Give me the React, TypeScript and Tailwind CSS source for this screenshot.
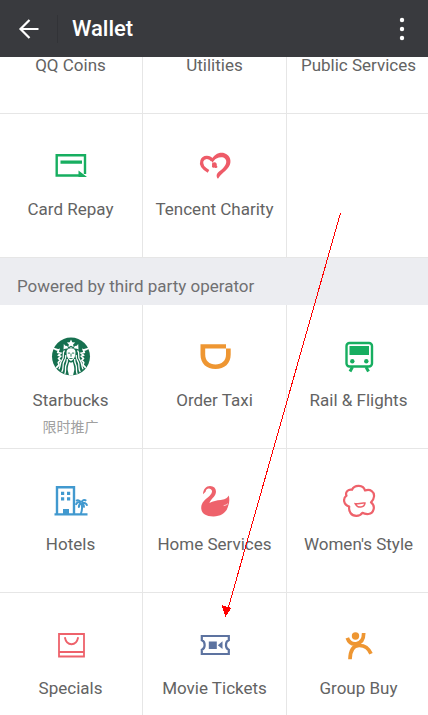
import type { ReactNode } from "react";

type Item = { label?: string; note?: string; icon?: ReactNode };

function CardRepayIcon() {
  return (
    <svg width="40" height="40" viewBox="0 0 40 40" fill="none" aria-hidden="true">
      <path d="M29 29.500H5.700V9.300h28.300V28" stroke="#17ae60" strokeWidth="2.400" />
      <path d="M9.500 14.500h21.500v3.300H9.500z M27.500 24.500L36 31H27.500z" fill="#17ae60" />
    </svg>
  );
}

function CharityIcon() {
  return (
    <svg width="40" height="40" viewBox="0 0 40 40" fill="none" aria-hidden="true">
      <path
        d="M13.500 25.300C8.500 22.500 5.600 18.500 6.900 14.800C8.500 10.500 14.500 10 17.500 14.700"
        stroke="#ee5b68"
        strokeWidth="3.200"
      />
      <path
        d="M16.300 14C19 8.500 24 5.800 29.500 7.200C35.500 9.200 37 15.500 34 20.500C31.500 25 26 27.500 23 32.800C20.800 30.500 21.500 27.700 23.500 26C27 23.500 30.500 20.500 31.200 16.500C31.900 11.500 26.500 9.700 21.500 12.500C19.500 13.500 18.500 15 17.500 17Z"
        fill="#ee5b68"
      />
      <path d="M17 17.500c2.500-2.500 5.500-.8 4.700 2 1.900 1.500-.2 3.700-2.100 2-2 .8-3.200-.6-2.500-2z" fill="#ee5b68" />
    </svg>
  );
}

function StarbucksIcon() {
  return (
    <svg width="40" height="40" viewBox="0 0 40 40" fill="none" aria-hidden="true">
      <circle cx="20" cy="19.500" r="19" fill="#16704f" />
      <path
        d="M20 2.500l1.300 2.700 2.900.3-2.100 2 .6 2.700-2.700-1.400-2.700 1.400.6-2.700-2.100-2 2.900-.3z M12.800 7l1.500 1.800 2 .2 1 2.500 2.700-1.200 2.700 1.200 1-2.500 2-.2 1.500-1.800.3 5.500c-4-2-11-2-15 0z"
        fill="#fff"
      />
      <path d="M15.500 15c0-5 9-5 9 0 0 5-2 8-4.500 9-2.500-1-4.500-4-4.500-9z" fill="#fff" />
      <path d="M16.800 16.100h2.200m2 0h2.200 M20 16.500v3.200 M18.400 21.500h3.200" stroke="#16704f" strokeWidth=".9" />
      <path
        d="M2 11.500c2.800.2 3.700 2 5.700 1.300L6.800 15.500l3 .7-2.200 2 2 1-2 2.300 1.500 1.700-1.800 2.200.7 2.500-2.800 3 M38 11.500c-2.800.2-3.700 2-5.700 1.300l.9 2.700-3 .7 2.200 2-2 1 2 2.300-1.500 1.700 1.800 2.200-.7 2.500 2.800 3"
        stroke="#fff"
        strokeWidth="1.700"
      />
      <path
        d="M13.500 13.500c-3 3 .5 6-2.300 9.300-2.500 3-1.300 5-3.200 9.500 M14.700 18c1 4-2.200 5.500-2.500 9-.2 3 .2 5-1.400 8 M16.300 22c.5 4-1.500 5-1.700 8-.2 3 .3 4.500-.8 7 M26.500 13.500c3 3-.5 6 2.300 9.300 2.500 3 1.300 5 3.200 9.500 M25.300 18c-1 4 2.200 5.500 2.500 9 .2 3-.2 5 1.400 8 M23.700 22c-.5 4 1.500 5 1.700 8 .2 3-.3 4.500.8 7"
        stroke="#fff"
        strokeWidth="1.300"
      />
      <path d="M18.200 25c-.8 3-1.700 5-1.500 8l1.300 5.500h4l1.300-5.500c.2-3-.7-5-1.500-8-1.200.8-2.400.8-3.600 0z" fill="#fff" />
    </svg>
  );
}

function TaxiIcon() {
  return (
    <svg width="40" height="40" viewBox="0 0 40 40" aria-hidden="true">
      <path
        d="M5.500 7.300H31V11.500H10.200V17.500C10.200 23.800 14.300 27.400 20.500 27.400S31 23.800 31 17.500V11.500H35.700V17.500C35.700 26.500 29.500 32 20.500 32S5.500 26.500 5.500 17.500Z"
        fill="#ee9632"
      />
    </svg>
  );
}

function RailIcon() {
  return (
    <svg width="40" height="40" viewBox="0 0 40 40" fill="none" aria-hidden="true">
      <rect x="7.500" y="6" width="25.500" height="23.500" rx="3" stroke="#17ae60" strokeWidth="2.400" />
      <path d="M10.500 9h19.500v9H10.500z" fill="#17ae60" />
      <circle cx="13.300" cy="24.300" r="2.200" fill="#17ae60" />
      <circle cx="27.300" cy="24.300" r="2.200" fill="#17ae60" />
      <path d="M13.500 30l-2.500 4.500 M27 30l2.500 4.500" stroke="#17ae60" strokeWidth="3" />
    </svg>
  );
}

function HotelIcon() {
  return (
    <svg width="40" height="40" viewBox="0 0 40 40" fill="none" aria-hidden="true">
      <path d="M6 33.500V6.200h17v27.300" stroke="#4199cf" strokeWidth="2.400" />
      <path d="M3.500 32.300h33v2.300h-33z M12 28h6v5h-6z" fill="#4199cf" />
      <path d="M10 10.700h3.200v3.200h-3.200z m6 0h3.200v3.200h-3.200z M10 16.200h3.200v3.200h-3.200z m6 0h3.200v3.200h-3.200z" fill="#4199cf" />
      <path
        d="M29.800 22c-2-1.500-4-.8-5 1.800 M30 21.500c-1.200-2.300-3.300-2.800-5-1.700 M30.500 21.500c.5-2.400 2.800-3.200 4.800-1.800 M30.500 22c2.500-1 5 .2 5.700 2.800 M30.200 22.300c-2 1-2.700 2.500-2.200 4.400 M31 22.300c1.700 1 2.200 2.700 1.600 4.400"
        stroke="#4199cf"
        strokeWidth="2"
      />
      <path d="M30.500 22c1 4 .5 8-.7 11" stroke="#4199cf" strokeWidth="2" />
    </svg>
  );
}

function SwanIcon() {
  return (
    <svg width="40" height="40" viewBox="0 0 40 40" aria-hidden="true">
      <path
        d="M8 13.200C8.300 8 11.200 5 15 5c4.400.1 6.600 3.200 5.800 7-.8 3.900-5.200 6.300-6.400 10 3.800-2 7.200-2.900 11.400-3.100 3.300-.3 6.200-1 8-4.300.9 4 .6 7.400-.5 10-1.500 7-7.500 10.900-15 10.800-7 0-11.400-2.500-12-7.400-.7-6.200 3.600-9.200 8.400-13.300 2.400-2.200 3.200-5.200 1.200-6.500-2.500-1.500-4.700-.2-5.300 2.500z"
        fill="#ee626b"
      />
      <path d="M33 22.500c-1 1.300-2.600 1.800-4.300 2.100" stroke="#fff" strokeWidth=".7" fill="none" />
    </svg>
  );
}

function FlowerIcon() {
  return (
    <svg width="40" height="40" viewBox="0 0 40 40" fill="none" aria-hidden="true">
      <path
        d="M13 8.800C15.500 3.300 24.500 3.500 26 9.500C31.500 7.500 35.500 11 35 15.500C34.800 18 33.800 19.800 32 21.300C37 25 34.800 32.500 29.500 33C27 33.200 25 32.800 23.300 31.800C20.500 36 14 35.500 11.500 32C10.200 30 9.800 28 10.200 25.500C4.500 24 3.500 17.500 7.500 14.700C5.800 11 9.500 8 13 8.800Z"
        stroke="#ee626b"
        strokeWidth="2.200"
        strokeLinejoin="round"
      />
      <path d="M16.300 22.800c3.500.5 5.500-1.300 9.700-.7-.7 4.600-7.200 5.700-9.700.7z" stroke="#ee626b" strokeWidth="1.500" />
    </svg>
  );
}

function BagIcon() {
  return (
    <svg width="40" height="40" viewBox="0 0 40 40" fill="none" aria-hidden="true">
      <path d="M8 9h25v22.500H8z M8 27h25" stroke="#ee626b" strokeWidth="1.800" />
      <path d="M13.800 12.200c.8 3.800 3.300 7 6.700 7s5.900-3.200 6.700-7" stroke="#ee626b" strokeWidth="1.900" />
    </svg>
  );
}

function TicketIcon() {
  return (
    <svg width="40" height="40" viewBox="0 0 40 40" fill="none" aria-hidden="true">
      <path
        d="M6.800 11H33.800V15.300C30 16.500 30 23.500 33.800 24.700V29H6.800V24.700C10.600 23.500 10.600 16.500 6.800 15.300Z"
        stroke="#5d73a0"
        strokeWidth="2.200"
      />
      <path d="M13.800 16.500h8v7.500h-8z M22.800 20.200l4.700-3.900v7.800z" fill="#5d73a0" />
    </svg>
  );
}

function GroupBuyIcon() {
  return (
    <svg width="40" height="40" viewBox="0 0 40 40" fill="none" aria-hidden="true">
      <circle cx="16.500" cy="11" r="3.700" fill="#ee9632" />
      <path
        d="M8.300 12.800c1.500 4.500 4.700 6.500 8.900 6 5-.6 7.500-4.500 7.500-10.700 M11 34.200c.2-8 3-13.500 9-13.700 5.800-.2 9.800 3.200 12 8.200"
        stroke="#ee9632"
        strokeWidth="3.700"
      />
    </svg>
  );
}

const tencentItems: Item[] = [
  { label: "QQ Coins" },
  { label: "Utilities" },
  { label: "Public Services" },
  { label: "Card Repay", icon: <CardRepayIcon /> },
  { label: "Tencent Charity", icon: <CharityIcon /> },
  {},
];

const partnerItems: Item[] = [
  { label: "Starbucks", note: "限时推广", icon: <StarbucksIcon /> },
  { label: "Order Taxi", icon: <TaxiIcon /> },
  { label: "Rail & Flights", icon: <RailIcon /> },
  { label: "Hotels", icon: <HotelIcon /> },
  { label: "Home Services", icon: <SwanIcon /> },
  { label: "Women's Style", icon: <FlowerIcon /> },
  { label: "Specials", icon: <BagIcon /> },
  { label: "Movie Tickets", icon: <TicketIcon /> },
  { label: "Group Buy", icon: <GroupBuyIcon /> },
];

function Tile({ label, note, icon }: Item) {
  const frame = "h-36 border-r border-b border-[#e6e6e6] bg-white";
  if (!label) return <div className={frame} />;
  return (
    <button type="button" className={`${frame} flex flex-col items-center pt-8 whitespace-nowrap`}>
      <span className="flex h-10 w-10 items-center justify-center">{icon}</span>
      <span className="mt-3 text-[17px] leading-[22px] text-[#636363]">{label}</span>
      {note && <span className="mt-1.5 text-sm leading-5 text-[#a0a0a0]">{note}</span>}
    </button>
  );
}

function TileGrid({ items }: { items: Item[] }) {
  return (
    <div className="-mr-[3px] -ml-px grid grid-cols-3">
      {items.map((item, i) => (
        <Tile key={i} {...item} />
      ))}
    </div>
  );
}

export default function App() {
  return (
    <div className="relative flex h-screen flex-col overflow-hidden bg-white font-['Roboto','Noto_Sans_CJK_SC',sans-serif]">
      <header className="z-10 flex h-[57px] shrink-0 items-center bg-[#393a3e] text-white">
        <button type="button" aria-label="Back" className="flex h-full w-[57px] items-center justify-center">
          <svg width="24" height="24" viewBox="0 0 24 24" fill="none" stroke="currentColor" strokeWidth="2.200">
            <path d="M21.500 12H3.500 M12.500 3L3.500 12l9 9" />
          </svg>
        </button>
        <span className="h-7 w-px bg-[#323337]" />
        <h1 className="ml-3.5 flex-1 text-[22px] leading-7 font-medium">Wallet</h1>
        <button type="button" aria-label="More" className="flex h-full w-[52px] items-center justify-center">
          <svg width="6" height="24" viewBox="0 0 6 24" fill="currentColor">
            <circle cx="3" cy="3" r="2.200" />
            <circle cx="3" cy="12" r="2.200" />
            <circle cx="3" cy="21" r="2.200" />
          </svg>
        </button>
      </header>
      <main className="-mt-[87px]">
        <TileGrid items={tencentItems} />
        <h2 className="flex h-[47px] items-end bg-[#ecedf1] px-[17px] pb-2 text-[17px] leading-[22px] text-[#707072]">
          Powered by third party operator
        </h2>
        <TileGrid items={partnerItems} />
      </main>
      <svg
        className="pointer-events-none absolute top-[212px] left-[220px]"
        width="124"
        height="408"
        viewBox="0 0 124 408"
        shapeRendering="crispEdges"
        aria-hidden="true"
      >
        <path d="M120.500 1L8.500 395" stroke="#ff0000" strokeWidth="1" />
        <path d="M1.500 393L11.500 396L5.500 405Z" fill="#ff0000" />
      </svg>
    </div>
  );
}
